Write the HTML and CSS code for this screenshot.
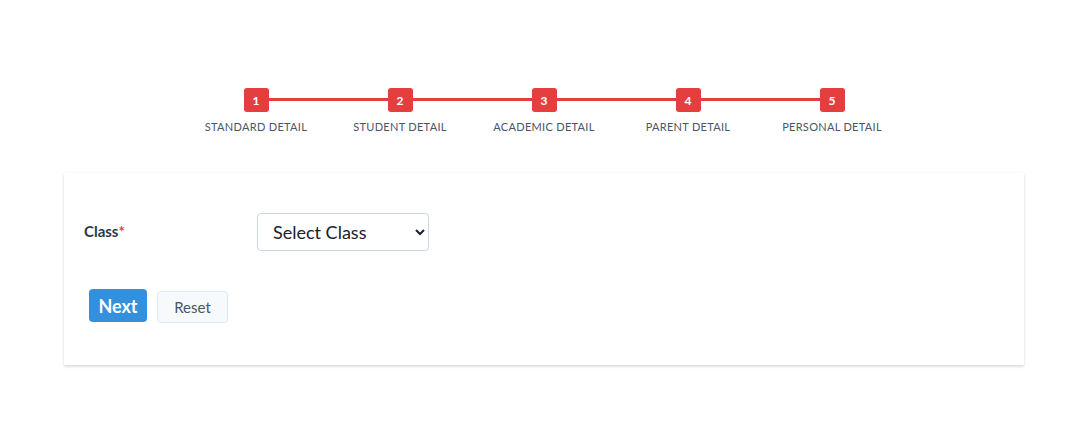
FILE: index.html
```html
<!DOCTYPE html>
<html>
<head>
<meta charset="utf-8">
<link rel="stylesheet" href="styles.css">
</head>
<body>
<div class="page">
  <div class="stepper">
    <div class="line"></div>
    <div class="step"><div class="num">1</div><div class="lbl">STANDARD DETAIL</div></div>
    <div class="step"><div class="num">2</div><div class="lbl">STUDENT DETAIL</div></div>
    <div class="step"><div class="num">3</div><div class="lbl">ACADEMIC DETAIL</div></div>
    <div class="step"><div class="num">4</div><div class="lbl">PARENT DETAIL</div></div>
    <div class="step"><div class="num">5</div><div class="lbl">PERSONAL DETAIL</div></div>
  </div>
  <div class="card">
    <div class="row">
      <label class="flabel">Class<span class="req">*</span></label>
      <select class="sel"><option>Select Class</option></select>
    </div>
    <div class="actions">
      <button class="btn next">Next</button>
      <button class="btn reset">Reset</button>
    </div>
  </div>
</div>
</body>
</html>
```
FILE: styles.css
```css
* { box-sizing: border-box; }
html, body { margin: 0; padding: 0; background: #fff; }
body { font-family: "Lato", "Noto Sans", sans-serif; color: #2d3748; }
.page { width: 960px; margin-left: 64px; padding-top: 88px; padding-bottom: 40px; }
.stepper { position: relative; display: flex; width: 720px; margin-left: 120px; }
.line { position: absolute; left: 72px; right: 72px; top: 10px; height: 3px; background: #e53e3e; }
.step { width: 144px; display: flex; flex-direction: column; align-items: center; position: relative; }
.num { width: 25px; height: 24px; border-radius: 3px; background: #e53e3e; color: #fff; font-size: 12px; font-weight: 700; display: flex; align-items: center; justify-content: center; }
.lbl { margin-top: 8px; font-size: 11px; color: #4a5568; letter-spacing: 0.3px; white-space: nowrap; }
.card { margin-top: 40px; height: 192px; background: #fff; box-shadow: 0 1px 3px rgba(0,0,0,0.12), 0 2px 2px rgba(0,0,0,0.06); padding: 40px 20px 0 20px; }
.row { display: flex; align-items: center; }
.flabel { width: 173px; font-size: 15px; font-weight: 700; color: #2d3748; margin-top: -2px; }
.req { color: #e53e3e; }
.sel { width: 172px; height: 38px; border: 1px solid #cbd5e0; border-radius: 4px; background: #fff; font-family: "Lato", "Noto Sans", sans-serif; font-size: 18px; color: #1a202c; padding: 0 10px 0 11px; }
.actions { display: flex; align-items: flex-start; gap: 10px; margin-top: 38px; padding-left: 5px; }
.btn { font-family: "Lato", "Noto Sans", sans-serif; border-radius: 4px; cursor: pointer; }
.next { width: 58px; height: 33px; background: #3490dc; color: #fff; border: none; font-size: 18px; font-weight: 700; }
.reset { margin-top: 2px; width: 71px; height: 32px; background: #f7fafc; border: 1px solid #e2e8f0; color: #4a5568; font-size: 15px; }
```
